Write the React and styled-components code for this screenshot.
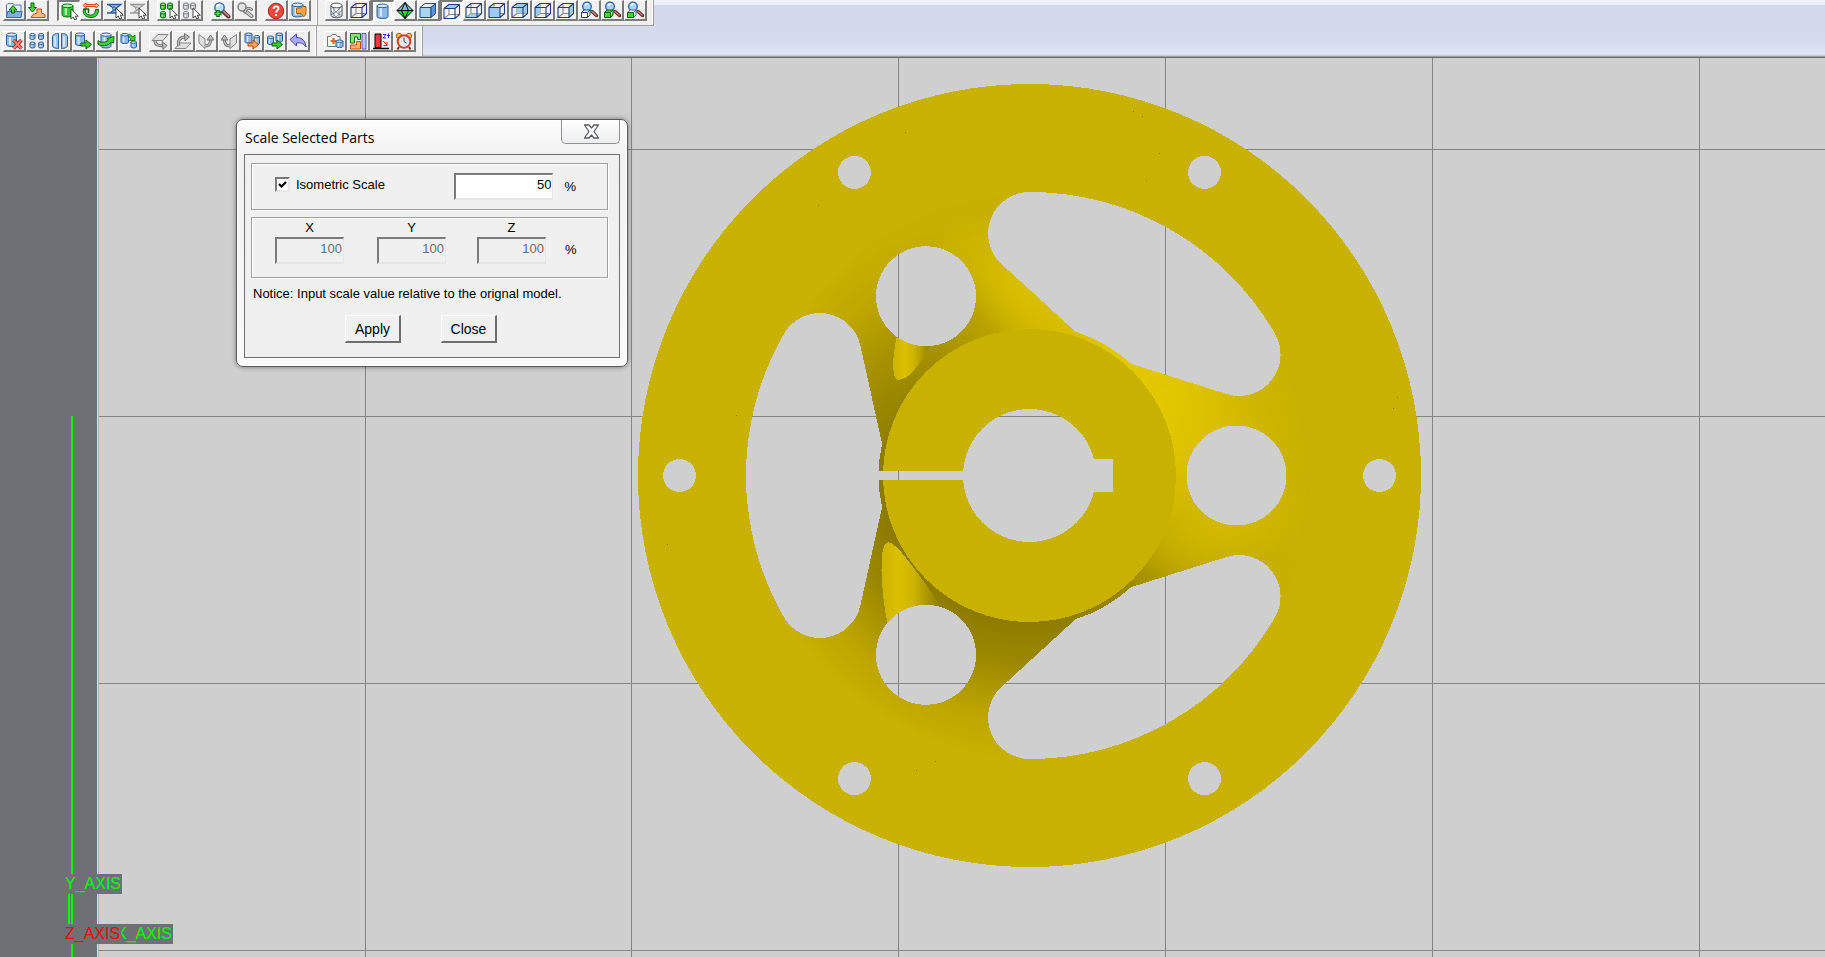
import React, { useState } from 'react';
import styled, { createGlobalStyle } from 'styled-components';

const GlobalStyle = createGlobalStyle`
  * {
    box-sizing: border-box;
  }

  body {
    margin: 0;
    font-family: 'Liberation Sans', Arial, sans-serif;
    font-size: 13px;
    color: #000;
    overflow: hidden;
  }
`;

const Page = styled.div`
  display: flex;
  flex-direction: column;
  height: 100vh;
  overflow: hidden;
`;

const Header = styled.header`
  display: flex;
  flex-direction: column;
  flex: none;
  background: linear-gradient(#f0f4fa 0, #e6ebf5 5px, #d3d8ec 5px, #d5daed 42px, #e0e7f5 54px, #b9c1d6 56px);
  border-bottom: 1px solid #666;
  box-shadow: inset 0 -1px 0 #a0a0a0;
`;

const ToolbarRow = styled.div`
  display: flex;
  align-items: flex-start;
  height: ${({ $height }) => $height}px;
  overflow: hidden;
`;

const Toolbar = styled.div`
  display: flex;
  align-items: flex-end;
  gap: 8px;
  height: 100%;
  padding: 0 6px 4px ${({ $inner }) => ($inner ? 7 : 3)}px;
  background: #f0f0f0;
  border-right: 1px solid #a0a0a0;
  border-bottom: 1px solid #a0a0a0;
  box-shadow: inset -1px 0 0 #fff, 0 1px 0 #fff;
`;

const Group = styled.div`
  display: flex;
`;

const ToolButton = styled.button`
  width: 23px;
  height: 21px;
  padding: 0;
  border-style: solid;
  border-width: 1px 2px 2px 1px;
  border-color: #fff #7a7a7a #7a7a7a #fff;
  background: #f0f0f0;
  line-height: 0;

  &[aria-pressed='true'] {
    border-width: 2px 1px 1px 2px;
    border-color: #7a7a7a #fff #fff #7a7a7a;
    background: repeating-conic-gradient(#fff 0 25%, #f0f0f0 0 50%) 0 0 / 2px 2px;
  }

  svg {
    display: block;
  }
`;

const Viewport = styled.main`
  position: relative;
  flex: 1;
  overflow: hidden;
  background: #cfcfcf;
`;

const Scene = styled.svg`
  display: block;
  width: 100%;
  height: 100%;
`;

const AxisLabel = styled.span`
  position: absolute;
  left: ${({ $x }) => $x}px;
  top: ${({ $y }) => $y}px;
  height: 20px;
  padding-right: 1px;
  background: #6d7074;
  color: ${({ $color }) => $color};
  font-size: 16px;
  line-height: 20px;
`;

const Dialog = styled.section`
  position: absolute;
  left: 236px;
  top: 61px;
  width: 392px;
  padding: 0 7px 8px;
  border: 1px solid #5a5a5a;
  border-radius: 7px;
  background: linear-gradient(#fdfdfd 0, #f1f1f1 34px, #fafafa 100%);
  box-shadow: inset 0 0 0 1px #fff, 0 0 5px rgba(0, 0, 0, 0.45);
`;

const TitleBar = styled.div`
  display: flex;
  justify-content: space-between;
  height: 34px;
  padding-left: 1px;
`;

const Title = styled.h1`
  margin: 0;
  font-family: 'Open Sans', 'Noto Sans', sans-serif;
  font-size: 14px;
  font-weight: 400;
  line-height: 36px;
`;

const CloseBox = styled.button`
  width: 59px;
  height: 24px;
  padding: 0 0 0 1px;
  border: 1px solid #8d8f93;
  border-top: 0;
  border-radius: 0 0 5px 5px;
  background: linear-gradient(#fff, #ededed);
  line-height: 0;
`;

const Body = styled.div`
  display: flex;
  flex-direction: column;
  height: 204px;
  padding: 8px 11px 0 6px;
  border: 1px solid #6f6f6f;
  background: #f0f0f0;
`;

const Frame = styled.div`
  display: flex;
  height: ${({ $height }) => $height}px;
  margin-bottom: 7px;
  padding: ${({ $top }) => $top}px 31px 0 23px;
  border: 1px solid #a0a0a0;
  box-shadow: inset 1px 1px 0 #fff, 1px 1px 0 #fff;
`;

const CheckLabel = styled.label`
  display: flex;
  align-items: center;
  gap: 6px;
  width: 181px;
  height: 23px;
`;

const CheckBox = styled.input`
  appearance: none;
  width: 15px;
  height: 15px;
  margin: 0;
  border: 2px solid;
  border-color: #7a7a7a #e8e8e8 #e8e8e8 #7a7a7a;
  background: #fff;

  &:checked {
    background: #fff
      url("data:image/svg+xml,%3Csvg xmlns='http://www.w3.org/2000/svg' viewBox='0 0 11 11'%3E%3Cpath d='M2 5 4.500 7.500 9 3' fill='none' stroke='%23000' stroke-width='2.200'/%3E%3C/svg%3E")
      center / 11px no-repeat;
  }
`;

const NumberBox = styled.input`
  width: ${({ $width }) => $width}px;
  height: 27px;
  padding: 0 1px 5px;
  border: 2px solid;
  border-color: #7a7a7a #e6e6e6 #e6e6e6 #7a7a7a;
  border-right-width: 1px;
  background: #fff;
  color: #000;
  font: 13px 'Liberation Sans', Arial, sans-serif;
  text-align: right;

  &:disabled {
    background: #f0f0f0;
    color: #6d6d6d;
  }
`;

const Percent = styled.span`
  margin-left: 11px;
  line-height: 28px;
`;

const AxisField = styled.label`
  display: flex;
  flex-direction: column;
  align-items: center;
  gap: 2px;
  margin-right: ${({ $gap }) => $gap}px;
  line-height: 15px;
`;

const AxisPercent = styled(Percent)`
  margin-left: 19px;
  padding-top: 16px;
`;

const Notice = styled.p`
  margin: 0 2px;
  line-height: 18px;
`;

const Actions = styled.div`
  display: flex;
  gap: 40px;
  margin: 12px 0 0 94px;
`;

const PushButton = styled.button`
  width: 56px;
  height: 28px;
  padding: 0;
  border-style: solid;
  border-width: 1px 2px 2px 1px;
  border-color: #fff #6d6d6d #6d6d6d #fff;
  background: #f0f0f0;
  color: #000;
  font: 14px 'Liberation Sans', Arial, sans-serif;
`;

/* ---------- toolbar icons, drawn on a 20 x 18 grid ---------- */

const TONES = {
  blue: ['#2d5f95', '#8fbbe2', '#d8ebfa'],
  green: ['#0b6e12', '#32c83a', '#b5f3a8'],
  gray: ['#7c7c88', '#c4c8d0', '#f2f2f5'],
};

const Cyl = ({ x, y, w, h, tone = 'blue' }) => {
  const [line, fill, light] = TONES[tone];
  const ry = Math.max(1.2, w / 6);
  return (
    <g stroke={line}>
      <path
        d={`M${x} ${y + ry}v${h - 2 * ry}a${w / 2} ${ry} 0 0 0 ${w} 0v${2 * ry - h}z`}
        fill={fill}
      />
      <path d={`M${x + w * 0.35} ${y + ry * 2}v${h - ry * 3}`} stroke={light} strokeWidth={w / 5} />
      <ellipse cx={x + w / 2} cy={y + ry} rx={w / 2} ry={ry} fill={light} />
    </g>
  );
};

const Cursor = () => (
  <path d="M12 7v10l2.300-2 1.500 3.200 2-1-1.500-3h3z" fill="#fff" stroke="#333" strokeWidth=".9" />
);

const FACES = {
  top: 'M2 6.500 7 2.500H17.500L13 6.500z',
  bottom: 'M2 16.500 7 12.500H17.500L13 16.500z',
  front: 'M2 6.500H13V16.500H2z',
  back: 'M7 2.500H17.500V12.500H7z',
  left: 'M2 6.500 7 2.500V12.500L2 16.500z',
  right: 'M13 6.500 17.500 2.500V12.500L13 16.500z',
};

const Cube = ({ face }) => (
  <g fill="none" stroke="#1f3f7d" strokeWidth="1.1" strokeLinejoin="round">
    <path d="M7 2.500V12.500H17.500M7 12.500 2 16.500" stroke="#8a8a8a" />
    {face && <path d={FACES[face]} fill="#9ccbee" stroke="none" />}
    <path d="M2 6.500H13V16.500H2zM2 6.500 7 2.500H17.500V12.500L13 16.500M13 6.500 17.500 2.500" />
  </g>
);

const SolidCube = () => (
  <g stroke="#1f4f88" strokeLinejoin="round">
    <path d={FACES.front} fill="#a9d2f3" />
    <path d={FACES.top} fill="#dff0fd" />
    <path d={FACES.right} fill="#5c95cc" />
  </g>
);

const Lens = () => (
  <g>
    <path d="m10.500 10 6 5.500" stroke="#5a2a2a" strokeWidth="4" strokeLinecap="round" />
    <path d="m11 10 5.500 5" stroke="#b98080" strokeWidth="2" strokeLinecap="round" />
    <circle cx="7.500" cy="6.500" r="4.700" fill="#bfe0fa" stroke="#2c5c9c" strokeWidth="1.300" />
    <path d="M5 6a3 3 0 0 1 3-2.500" fill="none" stroke="#fff" strokeWidth="1.500" />
  </g>
);

const LensCube = ({ fill, line = '#1f3f7d', flat }) => (
  <g strokeLinejoin="round">
    <path d="m13 10.500 4.500 4" stroke="#6b3030" strokeWidth="3.500" strokeLinecap="round" />
    <path d="m13 10.500 4 3.500" stroke="#b98080" strokeWidth="1.500" strokeLinecap="round" />
    <circle cx="8" cy="5.500" r="4.300" fill="#a9d4f6" stroke="#2c5c9c" strokeWidth="1.300" />
    <path d="M6 4.500a3 3 0 0 1 3-1.500" fill="none" stroke="#fff" strokeWidth="1.500" />
    <path d="M2.500 11.500 5 9h6l-2.500 2.500M11 9v5l-2.500 2.500" fill={flat ? '#fff' : fill} stroke={flat ? '#44608c' : line} />
    <path d="M2.500 11.500h6v5h-6z" fill={fill} stroke={line} />
  </g>
);

const Arrow = ({ fill = '#38cf2c', stroke = '#0c6010' }) => (
  <path d="M8 11h5V8l5.500 4.500L13 17v-3H8z" fill={fill} stroke={stroke} strokeLinejoin="round" />
);

const Flip = ({ d, arrow, head }) => (
  <g strokeLinejoin="round">
    <path d={d} fill="#e0e0e0" stroke="#858585" />
    <path d={arrow} fill="none" stroke="#707070" strokeWidth="3" />
    <path d={arrow} fill="none" stroke="#bdbdbd" strokeWidth="1.300" />
    <path d={head} fill="#bdbdbd" stroke="#707070" />
  </g>
);

const Mesh = ({ line, fill }) => (
  <g>
    <path d="M3 3.500h14L6 12h11L4 3.500M3 12h14" fill={fill} stroke={line} strokeWidth="1.300" />
    <circle cx="10" cy="7.500" r="1.500" fill={fill} stroke={line} />
    <Cursor />
  </g>
);

const Quad = ({ tone }) => (
  <g>
    <Cyl x={2.500} y={2} w={5} h={6.500} tone={tone} />
    <Cyl x={9.500} y={2} w={5} h={6.500} tone={tone} />
    <Cyl x={2.500} y={10.500} w={5} h={6.500} tone={tone} />
  </g>
);

const ICONS = {
  'Open file': (
    <g strokeLinejoin="round">
      <path d="M2.500 15.500V4l1.500-1.500h5L10.500 4H17v11.500z" fill="#e4eef9" stroke="#5b7ca8" />
      <path d="M2.500 16.500 3.500 10.500h14.500l-1 6z" fill="#7fb0e0" stroke="#3d6aa0" />
      <path d="M7.500 12V9H5l4-4.500L13 9h-2.500v3z" fill="#43d23a" stroke="#0c6010" />
    </g>
  ),
  'Import part': (
    <g strokeLinejoin="round">
      <path d="M4 16.500h14v-3l-3.500-1.500V8H10v4l-4 1.500z" fill="#ffba7c" stroke="#c84c14" />
      <path d="M4 2h3v4.500h2.500l-4 4.500-4-4.500H4z" fill="#43d23a" stroke="#0c6010" />
    </g>
  ),
  'Select part': (
    <g>
      <Cyl x={3} y={2} w={11} h={13} tone="green" />
      <Cursor />
    </g>
  ),
  'Move part': (
    <g strokeLinejoin="round">
      <path d="M2 4.500 5 2v1.500h10V2l3 2.500L15 7V5.500H5V7z" fill="#ffc7a8" stroke="#cc4a1c" />
      <path d="M4.500 8.500H2.500c-1 5 2.500 8 7.500 8 5 0 7.500-3 7.500-8h-3c0 4-2 5.500-5 5.500-4 0-5.500-2-5-5.500z" fill="#43d23a" stroke="#0c6010" />
      <path d="M2.500 8h5v4" fill="none" stroke="#0c6010" strokeWidth="1.500" />
    </g>
  ),
  'Select facets': <Mesh line="#2c5c9c" fill="#8fbbe2" />,
  'Deselect facets': <Mesh line="#999" fill="#ddd" />,
  'Select all': (
    <g>
      <Quad tone="green" />
      <Cursor />
    </g>
  ),
  'Deselect all': (
    <g>
      <Quad tone="gray" />
      <Cursor />
    </g>
  ),
  'Zoom in': (
    <g>
      <Lens />
      <path d="M6 9v7M2.500 12.500h7" stroke="#0c6010" strokeWidth="3.500" />
      <path d="M6 10v5M3.500 12.500h5" stroke="#55e545" strokeWidth="1.500" />
    </g>
  ),
  'Zoom previous': (
    <g fill="none" strokeLinecap="round">
      <path d="m9 9 7.500 6" stroke="#777" strokeWidth="4" />
      <path d="m9 9 7.500 6" stroke="#d2d2d2" strokeWidth="2" />
      <circle cx="7" cy="6" r="4" fill="#e2e2e2" stroke="#808080" strokeWidth="1.500" />
      <path d="M10 11c1-3.500 4-5 6.500-2.500" stroke="#777" strokeWidth="3" />
      <path d="M10 11c1-3.500 4-5 6.500-2.500" stroke="#ccc" strokeWidth="1.200" />
    </g>
  ),
  Help: (
    <g>
      <circle cx="10" cy="10" r="7.700" fill="#f0473c" stroke="#a8201a" />
      <path d="M7.500 8c0-3.500 5-3.500 5-.5 0 2-2.500 2-2.500 4" fill="none" stroke="#fff" strokeWidth="1.800" />
      <path d="M9 13h2v2H9z" fill="#fff" />
    </g>
  ),
  'Part info': (
    <g>
      <Cyl x={3} y={2} w={11} h={14} />
      <path d="M7.500 7h4l2-1.500H17V13l-2.500 3-2.500-3.500H7.500z" fill="#f2a44c" stroke="#a86012" />
    </g>
  ),
  'Wireframe part': (
    <g fill="#fff" stroke="#44505c">
      <path d="M5 4.500v10c1 3 10 3 11 0v-10" />
      <ellipse cx="10.500" cy="4.500" rx="5.500" ry="2.300" />
      <path d="m5 5 5 6 6-6M5 14l5-3 6 4M8 6.500V16M13 6.500V16M5 10l5 6 6-7" fill="none" strokeWidth=".6" />
    </g>
  ),
  Wireframe: <Cube />,
  Shaded: <Cyl x={4} y={2} w={11} h={14.500} />,
  Perspective: (
    <g stroke="#000" strokeLinejoin="round">
      <path d="M10 1.500 2 9.500h16z" fill="#8fb9d8" />
      <path d="M2 9.500h16l-8 8z" fill="#25e01f" />
      <path d="M10 1.500 6.500 9.500 10 17.500M10 1.500l3.500 8-3.500 8" fill="none" />
    </g>
  ),
  'Isometric view': <SolidCube />,
  'Top view': <Cube face="top" />,
  'Bottom view': <Cube face="bottom" />,
  'Front view': <Cube face="front" />,
  'Back view': <Cube face="back" />,
  'Left view': <Cube face="left" />,
  'Right view': <Cube face="right" />,
  'Zoom to frame': <LensCube fill="#fff" />,
  'Zoom to part': <LensCube fill="#43d23a" line="#0c6010" />,
  'Zoom to face': <LensCube fill="#43d23a" line="#0c6010" flat />,
  'Delete part': (
    <g>
      <Cyl x={2.500} y={1} w={10} h={13.500} />
      <path d="m9.500 8 8 8.500m0-8.500-8 8.500" stroke="#a81c1c" strokeWidth="3.800" />
      <path d="m9.500 8 8 8.500m0-8.500-8 8.500" stroke="#ff7d70" strokeWidth="2" />
    </g>
  ),
  'Array parts': (
    <g>
      <Cyl x={3} y={1.500} w={5} h={6} />
      <Cyl x={11.500} y={1.500} w={5} h={6} />
      <Cyl x={3} y={10} w={5} h={6} />
      <Cyl x={11.500} y={10} w={5} h={6} />
    </g>
  ),
  'Cut part': (
    <g fill="#9cc6ea" stroke="#2d5f95">
      <path d="M8.500 1.500v15C5 16.500 2.500 15 2.500 14V4.500c0-2 3-3 6-3z" />
      <path d="M11.500 1.500v15c3.500 0 6-1.500 6-2.500V4.500c0-2-3-3-6-3z" />
      <path d="M5 4.500v10M14 4.500v10" stroke="#e1f1fd" strokeWidth="1.500" />
    </g>
  ),
  'Translate part': (
    <g>
      <Cyl x={2.500} y={1} w={9} h={12.500} />
      <Arrow />
    </g>
  ),
  'Rotate part': (
    <g strokeLinejoin="round">
      <Cyl x={5} y={1} w={10} h={15} />
      <path d="M2 8.500C4 11 9 11 12.500 8L11 6.500l7-2-.5 6.500-2-1C12.500 14 5 15 2 12z" fill="#43d23a" stroke="#0c6010" />
    </g>
  ),
  'Scale part': (
    <g strokeLinejoin="round">
      <Cyl x={2} y={1.500} w={7.500} h={10} />
      <Cyl x={12} y={9} w={5.500} h={7} />
      <path d="m10.500 2 3.500 3 2-2v5.500h-5.500l1.700-1.700-3.500-3z" fill="#43d23a" stroke="#0c6010" strokeWidth=".8" />
    </g>
  ),
  'Flip down': <Flip d="M2 8.500 8 2.500h10l-5 6z" arrow="M5 9c0 4 4 5 8 4.500" head="m12 9.500 5 4-4 4z" />,
  'Flip up': <Flip d="M2 16.500 7 11h11l-5 5.500z" arrow="M6 14C4 9 7 5 12 5" head="m11.500 1.500 5 3.500-4.500 4z" />,
  'Flip right': <Flip d="M3 2.500 9 7v9.500L3 11z" arrow="M9 14c4 0 5.500-2 5.500-6" head="m11 8 3.500-5L18 8z" />,
  'Flip left': <Flip d="M17.500 2.500 11 7v9.500l6.500-5.500z" arrow="M11 14c-4 0-5.500-2-5.500-6" head="m2 8 3.500-5L9 8z" />,
  'Unite parts': (
    <g>
      <Cyl x={3} y={1} w={7} h={10} />
      <Cyl x={12} y={3.500} w={5.500} h={9} />
      <g transform="translate(-2)">
        <Arrow fill="#ffa55c" stroke="#b8480c" />
      </g>
    </g>
  ),
  'Copy parts': (
    <g>
      <Cyl x={2.500} y={4} w={6} h={8.500} />
      <Cyl x={11} y={1} w={6.500} h={9} />
      <g transform="translate(-1)">
        <Arrow />
      </g>
    </g>
  ),
  Undo: (
    <path d="M2 7.500 8.500 2v3.500c6 0 9 4 9.500 9.500-3-4-5.500-4.500-9.500-4V14z" fill="#a9a9f8" stroke="#4343b5" strokeLinejoin="round" />
  ),
  'Repair part': (
    <g>
      <path d="M2.500 4.500h3L7 2.500h4l1.500 2H15v10H2.500z" fill="#f8f8f8" stroke="#777" />
      <path d="M8.500 6v6M5.500 9h6" stroke="#e8641c" strokeWidth="2.200" />
      <Cyl x={11} y={8} w={7} h={7.500} />
    </g>
  ),
  'Auto layout': (
    <g>
      <path d="M2.500 1.500h10v6H9.500v-2.500H6.500v6h-4z" fill="#8be07c" stroke="#126b18" />
      <path d="M2.500 17v-4h6V9.500h4V17z" fill="#ffb46e" stroke="#c25312" />
      <path d="M14 1.500h4V17h-4z" fill="#c3c3fb" stroke="#5b5bb5" />
    </g>
  ),
  'Z height': (
    <g>
      <path d="M4 2h6v13.500H4z" fill="#f5363c" stroke="#000" />
      <path d="M2 16.500h16" stroke="#000" strokeWidth="1.500" />
      <path d="M12 2.500h3l-3 3.500h3M17.500 1.500V6M16 3.500h3" fill="none" stroke="#2929c9" />
      <path d="m12 9 4 4M16 10v3.500h-3.500" fill="none" stroke="#e02020" />
    </g>
  ),
  'Build time': (
    <g>
      <path d="m5 15-1.500 2.500M15 15l1.500 2.500" stroke="#7c3a12" strokeWidth="2" />
      <circle cx="5" cy="4" r="2.700" fill="#ffc35c" stroke="#a86012" />
      <circle cx="15" cy="4" r="2.700" fill="#ffc35c" stroke="#a86012" />
      <circle cx="10" cy="9.500" r="6.300" fill="#e4e8f4" stroke="#cf4330" strokeWidth="2" />
      <path d="M10 5.500v4l2.500 1.500" fill="none" stroke="#444" />
    </g>
  ),
};

const PRESSED = ['Select part', 'Shaded', 'Top view'];

const TOP_ROW = [
  [
    ['Open file', 'Import part'],
    ['Select part', 'Move part', 'Select facets', 'Deselect facets'],
    ['Select all', 'Deselect all'],
    ['Zoom in', 'Zoom previous'],
    ['Help', 'Part info'],
  ],
  [
    [
      'Wireframe part', 'Wireframe', 'Shaded', 'Perspective', 'Isometric view', 'Top view', 'Bottom view',
      'Front view', 'Back view', 'Left view', 'Right view', 'Zoom to frame', 'Zoom to part', 'Zoom to face',
    ],
  ],
];

const BOTTOM_ROW = [
  [
    ['Delete part', 'Array parts', 'Cut part', 'Translate part', 'Rotate part', 'Scale part'],
    ['Flip down', 'Flip up', 'Flip right', 'Flip left', 'Unite parts', 'Copy parts', 'Undo'],
  ],
  [['Repair part', 'Auto layout', 'Z height', 'Build time']],
];

const ToolbarLine = ({ bars, height }) => (
  <ToolbarRow $height={height}>
    {bars.map((groups, i) => (
      <Toolbar key={i} $inner={i > 0}>
        {groups.map((names) => (
          <Group key={names[0]}>
            {names.map((name) => (
              <ToolButton key={name} aria-label={name} aria-pressed={PRESSED.includes(name)}>
                <svg width="20" height="18" viewBox="0 0 20 18" fill="none">
                  {ICONS[name]}
                </svg>
              </ToolButton>
            ))}
          </Group>
        ))}
      </Toolbar>
    ))}
  </ToolbarRow>
);

/* ---------- the loaded part, centred on its own origin ---------- */

const SLOT =
  'M-169.100-129.900L-147.500-32A150 150 0 0 0-147.500 32L-169.100 129.900A41.500 41.500 0 0 1-245.500 141.800A283.500 283.500 0 0 1-245.500-141.800A41.500 41.500 0 0 1-169.100-129.900Z';

// light on the fillet around the hub: [angle in degrees, r, g, b]
const LIGHT = [
  [-180, 136, 119, 0],
  [-150, 150, 131, 0],
  [-125, 164, 144, 0],
  [-100, 190, 167, 0],
  [-80, 210, 184, 0],
  [-60, 225, 198, 0],
  [-30, 229, 202, 0],
  [-5, 220, 194, 0],
  [12, 208, 183, 0],
  [30, 186, 163, 0],
  [50, 150, 131, 0],
  [80, 140, 122, 0],
  [180, 138, 120, 0],
];

const lightAt = (deg) => {
  const i = Math.max(1, LIGHT.findIndex(([a]) => a >= deg));
  const [a0, ...c0] = LIGHT[i - 1];
  const [a1, ...c1] = LIGHT[i];
  const t = (deg - a0) / (a1 - a0);
  return `rgb(${c0.map((c, k) => Math.round(c + (c1[k] - c) * t)).join(',')})`;
};

const polar = (deg, r) => {
  const rad = (deg * Math.PI) / 180;
  return `${(r * Math.cos(rad)).toFixed(1)} ${(r * Math.sin(rad)).toFixed(1)}`;
};

const WEDGES = Array.from({ length: 240 }, (_, i) => -180 + i * 1.5);
const SPECKS = [
  [-125, -344], [-212, -271], [-294, -61], [103, -365], [112, -360], [129, -323], [116, -296],
  [367, -79], [363, -68], [-95, 285], [-114, 294], [-363, 68],
];

const Part = () => (
  <g transform="translate(1029.500 417.500)" shapeRendering="crispEdges">
    <defs>
      <radialGradient id="fade" gradientUnits="userSpaceOnUse" cx="0" cy="0" r="282">
        <stop offset=".5" stopColor="#fff" />
        <stop offset=".66" stopColor="#fff" stopOpacity=".75" />
        <stop offset=".85" stopColor="#fff" stopOpacity=".22" />
        <stop offset="1" stopColor="#fff" stopOpacity="0" />
      </radialGradient>
      <linearGradient id="dimple">
        <stop offset="0" stopColor="#cdb400" />
        <stop offset=".3" stopColor="#dac000" />
        <stop offset=".55" stopColor="#cdb400" />
        <stop offset="1" stopColor="#8f7d00" />
      </linearGradient>
      <radialGradient id="glow">
        <stop offset="0" stopColor="#dbc100" stopOpacity=".9" />
        <stop offset=".4" stopColor="#dbc100" stopOpacity=".6" />
        <stop offset="1" stopColor="#dbc100" stopOpacity="0" />
      </radialGradient>
      <mask id="fillet" maskUnits="userSpaceOnUse" x="-400" y="-400" width="800" height="800">
        <circle r="282" fill="url(#fade)" />
      </mask>
      <mask id="holes" maskUnits="userSpaceOnUse" x="-400" y="-400" width="800" height="800">
        <circle r="391.500" fill="#fff" />
        {[0, 120, 240].map((deg) => (
          <g key={deg} transform={`rotate(${deg})`}>
            <path d={SLOT} />
            <circle cx="207" r="50" />
            <circle cx="350" r="16.500" />
            <circle cx="-350" r="16.500" />
          </g>
        ))}
        <circle r="66.500" />
        <path d="M60-16.500H83.500V16.500H60zM-152-4.500H-60V4H-152z" />
      </mask>
    </defs>
    <g mask="url(#holes)">
      <circle r="391.500" fill="#c9b100" />
      <g mask="url(#fillet)">
        {WEDGES.map((deg) => (
          <path key={deg} d={`M0 0L${polar(deg, 290)}L${polar(deg + 1.8, 290)}z`} fill={lightAt(deg + 0.5)} />
        ))}
      </g>
      <ellipse rx="110" ry="48" transform="translate(-6 -182) rotate(42)" fill="url(#glow)" />
      <ellipse rx="90" ry="40" transform="translate(190 55) rotate(-17)" fill="url(#glow)" opacity=".5" />
      <path d="M-133-138C-138-115-138-90-128-96.500C-118-97-106-118-98-132z" fill="url(#dimple)" />
      <path d="M-142 148C-149 115-151 67-142 67C-134 64-112 98-90 128L-100 150z" fill="url(#dimple)" />
      <circle r="146.500" fill="#c9b100" />
      {SPECKS.map(([x, y]) => (
        <path key={`${x},${y}`} d={`M${x} ${y}h1v1h-1z`} fill="#8a7800" />
      ))}
    </g>
  </g>
);

const GRID_X = [365, 631, 898, 1165, 1432, 1699];
const GRID_Y = [91, 358, 625, 892];

const Workspace = () => (
  <Scene shapeRendering="crispEdges">
    <rect width="97" height="100%" fill="#6d7074" />
    <rect x="97" width="1" height="100%" fill="#f8f840" />
    <rect x="98" width="1" height="100%" fill="#b0b0b0" />
    {GRID_X.map((x) => (
      <rect key={x} x={x} width="1" height="100%" fill="#848484" />
    ))}
    {GRID_Y.map((y) => (
      <rect key={y} x="99" y={y} width="100%" height="1" fill="#848484" />
    ))}
    <rect x="71" y="358" width="2" height="100%" fill="#0f0" />
    <rect x="68" y="836" width="2" height="30" fill="#0f0" />
    <Part />
  </Scene>
);

const ScaleDialog = () => {
  const [isometric, setIsometric] = useState(true);
  const [scale, setScale] = useState('50');
  const [axes, setAxes] = useState({ X: '100', Y: '100', Z: '100' });

  return (
    <Dialog role="dialog" aria-labelledby="scale-title">
      <TitleBar>
        <Title id="scale-title">Scale Selected Parts</Title>
        <CloseBox aria-label="Close dialog">
          <svg width="17" height="15" viewBox="0 0 17 15" fill="none">
            <path
              d="M1.500 1H6L8.500 4 11 1h4.500L11 7.500 15.500 14H11L8.500 11 6 14H1.500L6 7.500z"
              fill="#fff"
              stroke="#555a66"
              strokeWidth="1.300"
              strokeLinejoin="round"
            />
          </svg>
        </CloseBox>
      </TitleBar>
      <Body>
        <Frame $height={47} $top={9}>
          <CheckLabel>
            <CheckBox type="checkbox" checked={isometric} onChange={(e) => setIsometric(e.target.checked)} />
            Isometric Scale
          </CheckLabel>
          <NumberBox
            $width={99}
            aria-label="Scale in percent"
            disabled={!isometric}
            value={scale}
            onChange={(e) => setScale(e.target.value)}
          />
          <Percent>%</Percent>
        </Frame>
        <Frame $height={61} $top={2}>
          {Object.keys(axes).map((axis) => (
            <AxisField key={axis} $gap={axis === 'X' ? 33 : axis === 'Y' ? 31 : 0}>
              {axis}
              <NumberBox
                $width={69}
                disabled={isometric}
                value={axes[axis]}
                onChange={(e) => setAxes({ ...axes, [axis]: e.target.value })}
              />
            </AxisField>
          ))}
          <AxisPercent>%</AxisPercent>
        </Frame>
        <Notice>Notice: Input scale value relative to the orignal model.</Notice>
        <Actions>
          <PushButton>Apply</PushButton>
          <PushButton>Close</PushButton>
        </Actions>
      </Body>
    </Dialog>
  );
};

const App = () => (
  <Page>
    <GlobalStyle />
    <Header>
      <ToolbarLine bars={TOP_ROW} height={26} />
      <ToolbarLine bars={BOTTOM_ROW} height={31} />
    </Header>
    <Viewport>
      <Workspace />
      <AxisLabel $x={65} $y={816} $color="#0f0">Y_AXIS</AxisLabel>
      <AxisLabel $x={116} $y={866} $color="#0f0">X_AXIS</AxisLabel>
      <AxisLabel $x={65} $y={866} $color="#f00">Z_AXIS</AxisLabel>
      <ScaleDialog />
    </Viewport>
  </Page>
);

export default App;
